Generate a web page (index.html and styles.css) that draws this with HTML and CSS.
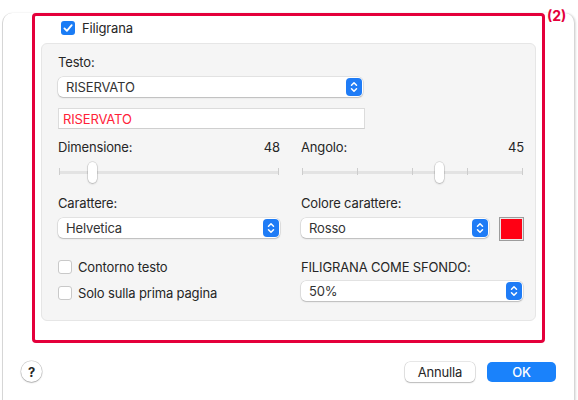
FILE: index.html
```html
<!DOCTYPE html>
<html lang="it">
<head>
    <meta charset="UTF-8">
    <meta name="viewport" content="width=device-width, initial-scale=1.0">
    <title>Filigrana</title>
    <link rel="stylesheet" href="styles.css">
</head>
<body>
    <div class="window">
        <div class="cornice">
            <span class="nota">(2)</span>

            <div class="intestazione">
                <span class="spunta attiva">
                    <svg width="14" height="14" viewBox="0 0 14 14"><rect width="14" height="14" rx="3" fill="#1a7cf5"/><path d="M3.4 7.4 5.9 9.9 10.7 4.1" fill="none" stroke="#fff" stroke-width="1.8" stroke-linecap="round" stroke-linejoin="round"/></svg>
                </span>
                <span>Filigrana</span>
            </div>

            <div class="pannello">
                <div class="etichetta">Testo:</div>
                <div class="menu menu-testo">
                    <span>RISERVATO</span>
                    <svg class="freccia" width="16" height="18" viewBox="0 0 16 18"><rect width="16" height="18" rx="4" fill="#1f7cf6"/><path d="M5.5 7.3 8 4.8l2.5 2.5M5.5 10.7 8 13.2l2.5-2.5" fill="none" stroke="#fff" stroke-width="1.5" stroke-linecap="round" stroke-linejoin="round"/></svg>
                </div>
                <div class="campo">RISERVATO</div>

                <div class="colonne">
                    <div class="colonna">
                        <div class="valore">
                            <span>Dimensione:</span>
                            <span>48</span>
                        </div>
                        <div class="cursore">
                            <div class="binario">
                                <i></i><i></i>
                            </div>
                            <div class="manopola" style="left: 15.2%"></div>
                        </div>
                        <div class="etichetta spazio-sopra">Carattere:</div>
                        <div class="menu menu-basso">
                            <span>Helvetica</span>
                            <svg class="freccia" width="16" height="18" viewBox="0 0 16 18"><rect width="16" height="18" rx="4" fill="#1f7cf6"/><path d="M5.5 7.3 8 4.8l2.5 2.5M5.5 10.7 8 13.2l2.5-2.5" fill="none" stroke="#fff" stroke-width="1.5" stroke-linecap="round" stroke-linejoin="round"/></svg>
                        </div>
                        <div class="opzioni">
                            <label class="opzione">
                                <span class="spunta"></span>
                                <span>Contorno testo</span>
                            </label>
                            <label class="opzione">
                                <span class="spunta"></span>
                                <span>Solo sulla prima pagina</span>
                            </label>
                        </div>
                    </div>

                    <div class="colonna">
                        <div class="valore">
                            <span>Angolo:</span>
                            <span>45</span>
                        </div>
                        <div class="cursore">
                            <div class="binario">
                                <i></i><i></i><i></i><i></i><i></i>
                            </div>
                            <div class="manopola" style="left: 62.4%"></div>
                        </div>
                        <div class="etichetta spazio-sopra">Colore carattere:</div>
                        <div class="riga-colore">
                            <div class="menu menu-colore">
                                <span>Rosso</span>
                                <svg class="freccia" width="16" height="18" viewBox="0 0 16 18"><rect width="16" height="18" rx="4" fill="#1f7cf6"/><path d="M5.5 7.3 8 4.8l2.5 2.5M5.5 10.7 8 13.2l2.5-2.5" fill="none" stroke="#fff" stroke-width="1.5" stroke-linecap="round" stroke-linejoin="round"/></svg>
                            </div>
                            <div class="campione"></div>
                        </div>
                        <div class="etichetta spazio-sfondo">FILIGRANA COME SFONDO:</div>
                        <div class="menu menu-sfondo">
                            <span>50%</span>
                            <svg class="freccia" width="16" height="18" viewBox="0 0 16 18"><rect width="16" height="18" rx="4" fill="#1f7cf6"/><path d="M5.5 7.3 8 4.8l2.5 2.5M5.5 10.7 8 13.2l2.5-2.5" fill="none" stroke="#fff" stroke-width="1.5" stroke-linecap="round" stroke-linejoin="round"/></svg>
                        </div>
                    </div>
                </div>
            </div>
        </div>

        <div class="pulsanti">
            <button class="aiuto">?</button>
            <div class="azioni">
                <button class="bottone">Annulla</button>
                <button class="bottone primario">OK</button>
            </div>
        </div>
    </div>
</body>
</html>
```

FILE: styles.css
```css
* {
    box-sizing: border-box;
    font-family: "Inter", "Liberation Sans", sans-serif;
}

body {
    margin: 0;
    background-color: #fff;
    font-size: 13px;
    line-height: 16px;
    letter-spacing: -0.15px;
    color: #262626;
}

.window {
    margin-left: 2px;
    width: 573px;
    height: 397px;
    background: #fff;
    border: 1px solid #d6d6d6;
    border-top: none;
    border-radius: 10px;
    box-shadow: 1px 0 2px rgba(0, 0, 0, 0.12);
}

.cornice {
    position: relative;
    margin: 13px 0 0 29px;
    width: 513px;
    border: 3px solid #e4003b;
    border-radius: 4px;
    padding: 0 6px 19px 6px;
}

.nota {
    position: absolute;
    left: calc(100% + 5px);
    top: -8px;
    font-weight: 700;
    font-size: 14px;
    letter-spacing: 0;
    color: #e4003b;
}

.intestazione {
    height: 27px;
    padding: 5px 0 0 20px;
    display: flex;
    align-items: flex-start;
    gap: 7px;
}

.intestazione span:last-child {
    margin-top: -1px;
}

.spunta {
    display: block;
    width: 14px;
    height: 14px;
    flex: none;
    background: #fff;
    border: 1px solid #c9c9c9;
    border-radius: 3px;
}

.spunta.attiva {
    border: none;
    background: none;
}

.spunta svg {
    display: block;
}

.pannello {
    background: #f5f5f5;
    border: 1px solid #e6e6e6;
    border-radius: 6px;
    padding: 10px 11px 19px 16px;
}

.etichetta {
    height: 16px;
}

.menu {
    height: 20px;
    display: flex;
    align-items: center;
    justify-content: space-between;
    padding: 0 1px 0 8px;
    background: #fff;
    border-radius: 5px;
    box-shadow: 0 0 0 0.5px rgba(0, 0, 0, 0.14), 0 1px 1.5px rgba(0, 0, 0, 0.18);
    color: #333;
}

.menu-testo {
    margin-top: 7px;
    width: 305px;
}

.freccia {
    display: block;
    flex: none;
}

.campo {
    margin-top: 11px;
    width: 307px;
    height: 21px;
    padding: 2px 4px;
    background: #fff;
    border: 1px solid #dcdcdc;
    border-bottom-color: #cfcfcf;
    color: #ff2238;
}

.colonne {
    margin-top: 10px;
    display: flex;
    gap: 21px;
}

.colonna {
    display: flex;
    flex-direction: column;
}

.colonna:first-child {
    width: 222px;
}

.colonna:last-child {
    width: 223px;
}

.valore {
    display: flex;
    justify-content: space-between;
    height: 16px;
}

.cursore {
    position: relative;
    margin: 7px 1px 0 1px;
    height: 20px;
}

.binario {
    margin-top: 6px;
    height: 7px;
    display: flex;
    justify-content: space-between;
    background: linear-gradient(#e3e3e3, #e3e3e3) 0 2.5px / 100% 3px no-repeat;
}

.binario i {
    width: 1px;
    height: 7px;
    background: #cdcdcd;
}

.manopola {
    position: absolute;
    top: 0;
    width: 9px;
    height: 21px;
    margin-left: -4.5px;
    background: #fff;
    border-radius: 5px;
    box-shadow: 0 0 0 0.5px rgba(0, 0, 0, 0.18), 0 1px 2px rgba(0, 0, 0, 0.2);
}

.spazio-sopra {
    margin-top: 13px;
}

.menu-basso {
    margin-top: 7px;
}

.opzioni {
    margin-top: 21px;
    display: flex;
    flex-direction: column;
    gap: 10px;
}

.opzione {
    display: flex;
    align-items: center;
    gap: 6px;
    height: 16px;
}

.riga-colore {
    margin-top: 7px;
    height: 20px;
    display: flex;
    align-items: flex-start;
    gap: 10px;
}

.menu-colore {
    width: 188px;
}

.campione {
    margin-top: -1px;
    width: 25px;
    height: 24px;
    background: #ff0014;
    border: 1px solid #9c9c9c;
    box-shadow: inset 0 0 0 1px #e8e8e8;
}

.spazio-sfondo {
    margin-top: 21px;
}

.menu-sfondo {
    margin-top: 6px;
    width: 222px;
}

.pulsanti {
    margin-top: 18px;
    padding: 0 18px 0 18px;
    display: flex;
    justify-content: space-between;
    align-items: center;
}

button {
    font-size: 13px;
    line-height: 16px;
    letter-spacing: -0.15px;
    border: none;
    background: #fff;
    color: #262626;
    cursor: pointer;
}

.aiuto {
    width: 21px;
    height: 21px;
    border-radius: 50%;
    padding: 0;
    font-weight: 700;
    box-shadow: 0 0 0 0.5px rgba(0, 0, 0, 0.2), 0 1px 1.5px rgba(0, 0, 0, 0.22);
}

.azioni {
    display: flex;
    gap: 12px;
}

.bottone {
    width: 70px;
    height: 20px;
    border-radius: 5px;
    padding: 0;
    box-shadow: 0 0 0 0.5px rgba(0, 0, 0, 0.18), 0 1px 1.5px rgba(0, 0, 0, 0.2);
}

.primario {
    width: 69px;
    background: #1a82fb;
    color: #fff;
    font-weight: 500;
    box-shadow: none;
}
```
